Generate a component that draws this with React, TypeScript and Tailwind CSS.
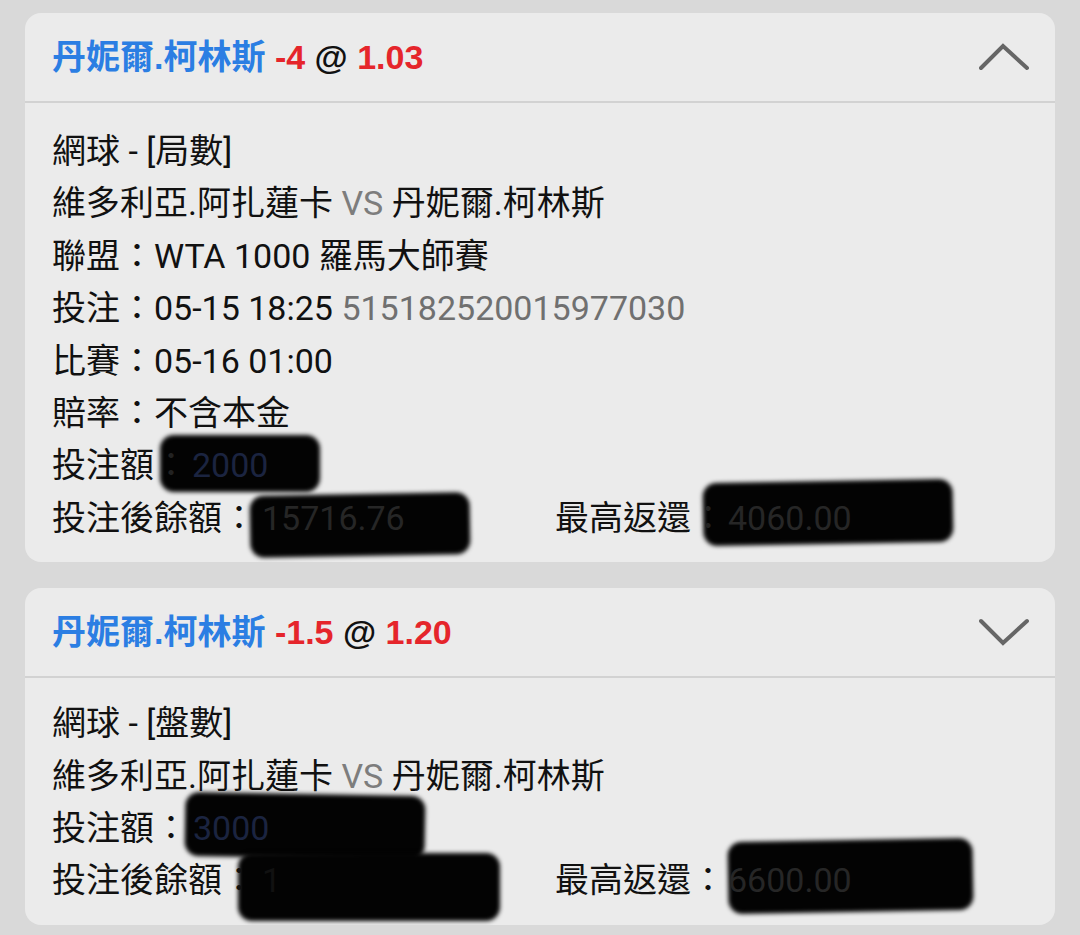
import React from "react";

const FONT = { fontFamily: 'Roboto, "Noto Sans CJK TC", sans-serif' };
const HFONT = { fontFamily: '"Liberation Sans", "Noto Sans CJK TC", sans-serif' };

function Chevron({ up }: { up: boolean }) {
  return (
    <svg width="50" height="28" viewBox="0 0 50 28" className="shrink-0">
      <polyline
        points={up ? "2,25 24,3 48,25" : "2,3 24,25 48,3"}
        fill="none"
        stroke="#666666"
        strokeWidth="4"
        strokeLinecap="round"
        strokeLinejoin="miter"
      />
    </svg>
  );
}

function Blob({ className }: { className: string }) {
  return (
    <div
      className={`absolute bg-[#030303] rounded-[14px] blur-[2px] ${className}`}
    />
  );
}

function Header({ odds, line, up }: { odds: string; line: string; up: boolean }) {
  return (
    <div className="h-[90px] flex items-center justify-between pl-[27px] pr-[26px] border-b-2 border-[#d2d2d2]">
      <div className="text-[34px] font-bold leading-none" style={HFONT}>
        <span className="text-[#2b7ee3]">丹妮爾.柯林斯</span>
        <span className="text-[#e5252b]"> {line}</span>
        <span className="text-[#111]"> @ </span>
        <span className="text-[#e5252b]">{odds}</span>
      </div>
      <Chevron up={up} />
    </div>
  );
}

export default function App() {
  return (
    <div className="min-h-[935px] w-[1080px] bg-[#d9d9d9] pt-[13px] px-[25px] flex flex-col gap-[26px]" style={FONT}>
      {/* Card 1 */}
      <div className="bg-[#ebebeb] rounded-[16px] overflow-hidden">
        <Header line="-4" odds="1.03" up={true} />
        <div className="pl-[27px] pt-[22px] pb-[18px] text-[34px] leading-[52.4px] text-[#111]">
          <div>網球 - [局數]</div>
          <div>
            維多利亞.阿扎蓮卡 <span className="text-[#7d7d7d]">VS</span> 丹妮爾.柯林斯
          </div>
          <div>聯盟：WTA 1000 羅馬大師賽</div>
          <div>
            投注：05-15 18:25 <span className="text-[#707070]">515182520015977030</span>
          </div>
          <div>比賽：05-16 01:00</div>
          <div>賠率：不含本金</div>
          <div className="relative">
            <Blob className="left-[108px] top-[-4px] w-[160px] h-[57px]" />
            <span className="relative">投注額</span>
            <span className="relative text-[#222]">：</span>
            <span className="relative ml-[4px] text-[#1b2440]">2000</span>
          </div>
          <div className="relative grid grid-cols-[503px_1fr]">
            <Blob className="left-[198px] top-[2px] w-[220px] h-[62px] rotate-[-1deg]" />
            <Blob className="left-[651px] top-[-11px] w-[250px] h-[63px] rotate-[-1deg]" />
            <div className="relative">
              投注後餘額：<span className="ml-[6px] text-[#262626]">15716.76</span>
            </div>
            <div className="relative">
              最高返還<span className="text-[#222]">：</span><span className="ml-[3px] text-[#262626]">4060.00</span>
            </div>
          </div>
        </div>
      </div>

      {/* Card 2 */}
      <div className="bg-[#ebebeb] rounded-[16px] overflow-hidden">
        <Header line="-1.5" odds="1.20" up={false} />
        <div className="pl-[27px] pt-[19px] pb-[18px] text-[34px] leading-[52.4px] text-[#111]">
          <div>網球 - [盤數]</div>
          <div>
            維多利亞.阿扎蓮卡 <span className="text-[#7d7d7d]">VS</span> 丹妮爾.柯林斯
          </div>
          <div className="relative">
            <Blob className="left-[133px] top-[-8px] w-[240px] h-[64px] rotate-[1deg]" />
            <span className="relative">投注額：</span>
            <span className="relative ml-[5px] text-[#1b2440]">3000</span>
          </div>
          <div className="relative grid grid-cols-[503px_1fr]">
            <Blob className="left-[186px] top-[-1px] w-[262px] h-[68px]" />
            <Blob className="left-[676px] top-[-14px] w-[245px] h-[72px] rotate-[-1deg]" />
            <div className="relative">
              投注後餘額：<span className="ml-[6px] text-[#111]">1</span>
            </div>
            <div className="relative">
              最高返還：<span className="ml-[3px] text-[#262626]">6600.00</span>
            </div>
          </div>
        </div>
      </div>
    </div>
  );
}
